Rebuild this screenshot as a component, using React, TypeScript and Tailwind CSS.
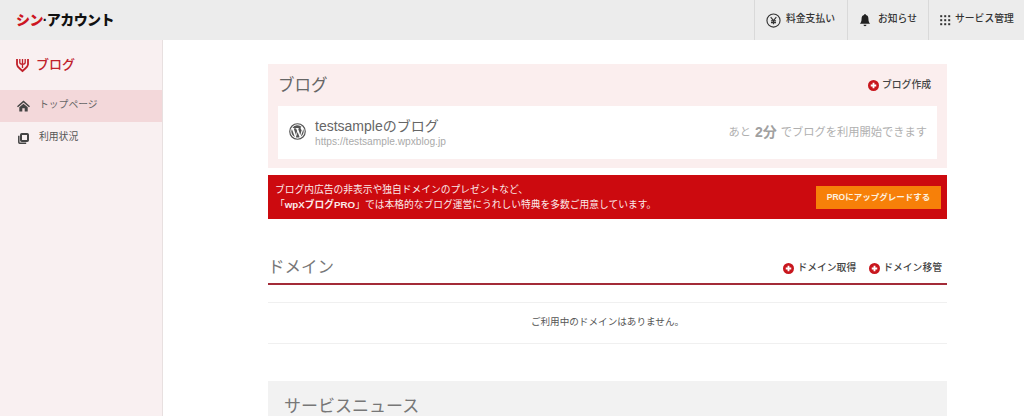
import React from "react";

const font = { fontFamily: '"Liberation Sans", "Noto Sans CJK JP", sans-serif' };

function PlusIcon() {
  return (
    <svg width="11" height="11" viewBox="0 0 12 12" className="shrink-0">
      <circle cx="6" cy="6" r="6" fill="#c8161d" />
      <path d="M6 3v6M3 6h6" stroke="#fff" strokeWidth="2" />
    </svg>
  );
}

function ActionLink({ label }: { label: string }) {
  return (
    <span className="flex items-center gap-[3px] text-[9.800px] font-medium text-[#444]">
      <PlusIcon />
      {label}
    </span>
  );
}

function YenIcon() {
  return (
    <svg width="15" height="15" viewBox="0 0 16 16" fill="none" stroke="#333" strokeWidth="1.2">
      <circle cx="8" cy="8" r="7" />
      <path d="M5 4.3 8 8l3-3.7M8 8v4M5.3 8.4h5.4M5.3 10.2h5.4" />
    </svg>
  );
}

function BellIcon() {
  return (
    <svg width="12" height="14" viewBox="0 0 14 15" fill="#222">
      <path d="M7 0.5c.7 0 1.1.5 1.1 1.1C10.300 2.100 11 3.900 11 6c0 3 .8 4.600 2 6H1c1.200-1.400 2-3 2-6 0-2.100.7-3.900 2.900-4.400C5.900 1 6.300.5 7 .5Z" />
      <path d="M5.300 13h3.400c0 1-.7 1.700-1.700 1.700S5.300 14 5.300 13Z" />
    </svg>
  );
}

function GridIcon() {
  return (
    <svg width="11" height="11" viewBox="0 0 11 11" fill="#333">
      {[0, 4, 8].flatMap((x) =>
        [0, 4, 8].map((y) => <rect key={`${x}-${y}`} x={x + 0.2} y={y + 0.2} width="2" height="2" />)
      )}
    </svg>
  );
}

function HeaderItem({ icon, label, cls }: { icon: React.ReactNode; label: string; cls: string }) {
  return (
    <div className={`flex h-full items-center border-l border-[#d9d9d9] pl-[11px] text-[9.800px] font-medium text-[#333] ${cls}`}>
      {icon}
      <span className="pb-[1px]">{label}</span>
    </div>
  );
}

function ShieldIcon() {
  return (
    <svg width="13" height="15" viewBox="0 0 13 15" fill="none" stroke="#c0202a" strokeWidth="1.800">
      <path d="M1 1v5.500c0 2.500 2.500 3.500 5.500 6.500 3-3 5.500-4 5.500-6.500V1" />
      <path d="M3.800 1v3.500c0 1 1.200 1.800 2.700 1.800s2.700-.8 2.700-1.800V1M6.500 1v9" strokeWidth="1.300" />
    </svg>
  );
}

function HomeIcon() {
  return (
    <svg width="13" height="12" viewBox="0 0 13 12" fill="#444">
      <path d="M6.500.5 0 6.300l1 1L6.500 2.500 12 7.300l1-1Z" />
      <path d="M2.300 7.300 6.500 3.700l4.200 3.600V11.500H7.700V8.300H5.300v3.200H2.300Z" />
    </svg>
  );
}

function CopyIcon() {
  return (
    <svg width="11" height="11" viewBox="0 0 11 11" fill="none" stroke="#444">
      <rect x="3" y="1" width="7" height="7" rx="0.800" strokeWidth="2" />
      <path d="M.8 2.800v6.500c0 .5.4.9.9.9h6.500" strokeWidth="1.500" />
    </svg>
  );
}

function WpIcon() {
  return (
    <svg width="17" height="17" viewBox="0 0 16 16" className="mb-[3px]">
      <circle cx="8" cy="8" r="7.300" fill="none" stroke="#555" strokeWidth="1.100" />
      <path d="M2.200 8c0 2.300 1.300 4.300 3.300 5.200L2.700 5.700C2.400 6.400 2.200 7.200 2.200 8Z" fill="#555" />
      <path d="M12 7.700c0-.7-.3-1.200-.5-1.600-.3-.5-.6-.9-.6-1.400 0-.5.4-1 1-1h.1A5.800 5.800 0 0 0 3.200 4.800h.4c.6 0 1.500-.1 1.500-.1.300 0 .3.400 0 .5 0 0-.3 0-.6.100l2 5.900 1.200-3.600-.9-2.300c-.3 0-.6-.1-.6-.1-.3 0-.3-.5 0-.5 0 0 .9.100 1.500.1s1.500-.1 1.500-.1c.3 0 .3.400 0 .5 0 0-.3 0-.6.100l2 5.900.6-1.900c.2-.7.400-1.300.400-1.700Z" fill="#555" />
      <path d="m8.100 8.500-1.700 5a5.800 5.800 0 0 0 3.600-.1L8.100 8.500ZM13.100 5.200c.1.200.1.400.1.700 0 .6-.1 1.200-.4 2l-1.800 5.100a5.800 5.800 0 0 0 2.100-7.800Z" fill="#555" />
    </svg>
  );
}

export default function App() {
  return (
    <div style={font} className="flex h-[416px] w-[1024px] flex-col overflow-hidden bg-white">
      <header className="flex h-[40px] shrink-0 items-center justify-between bg-[#ececec]">
        <div className="pl-[16px] text-[14px] font-black tracking-[-0.6px] text-[#111]">
          <span className="text-[#cc1522]">シン</span>·アカウント
        </div>
        <div className="flex h-full">
          <HeaderItem icon={<YenIcon />} label="料金支払い" cls="w-[93px] gap-[5px]" />
          <HeaderItem icon={<BellIcon />} label="お知らせ" cls="w-[81px] gap-[7px]" />
          <HeaderItem icon={<GridIcon />} label="サービス管理" cls="w-[96px] gap-[4px]" />
        </div>
      </header>
      <div className="flex min-h-0 flex-1">
        <aside className="w-[163px] shrink-0 border-r border-[#e8e0e0] bg-[#f9f0f1]">
          <div className="flex h-[50px] items-center gap-[7px] pl-[16px] text-[13px] font-medium text-[#c0202a]">
            <ShieldIcon />
            ブログ
          </div>
          <div className="flex h-[32px] items-center gap-[9px] bg-[#f3d8da] pl-[17px] text-[9.800px] text-[#666]">
            <HomeIcon />
            <span className="pb-[1px]">トップページ</span>
          </div>
          <div className="flex h-[32px] items-center gap-[10px] pl-[18px] text-[9.800px] text-[#555]">
            <CopyIcon />
            <span className="pb-[1px]">利用状況</span>
          </div>
        </aside>
        <main className="min-w-0 flex-1 pl-[105px] pt-[24px]">
          <div className="w-[679px]">
            <section className="h-[104px] bg-[#fbeeee] px-[10px]">
              <div className="flex h-[42px] items-center justify-between pr-[6px] pt-[1px]">
                <h2 className="text-[16.500px] text-[#666]">ブログ</h2>
                <ActionLink label="ブログ作成" />
              </div>
              <div className="flex h-[53px] items-center justify-between bg-white pl-[11px] pr-[10px]">
                <div className="flex items-center gap-[9px]">
                  <WpIcon />
                  <div>
                    <div className="text-[14px] leading-[18px] text-[#666]">testsampleのブログ</div>
                    <div className="text-[10.200px] leading-[13px] text-[#aaaaaa]">https://testsample.wpxblog.jp</div>
                  </div>
                </div>
                <div className="flex items-center gap-[4px] text-[11.250px] text-[#b0b0b0]">
                  あと <span className="text-[14px] font-bold text-[#a0a0a0]">2分</span> でブログを利用開始できます
                </div>
              </div>
            </section>
            <section className="mt-[7px] flex h-[44px] items-center justify-between bg-[#cc0a0f] pl-[7px] pr-[6px]">
              <p className="text-[9.750px] leading-[15px] text-[#fbe9e9]">
                ブログ内広告の非表示や独自ドメインのプレゼントなど、
                <br />
                「<b>wpXブログPRO</b>」では本格的なブログ運営にうれしい特典を多数ご用意しています。
              </p>
              <div className="flex h-[23px] w-[125px] items-center justify-center bg-[#f78009] text-[8.500px] font-bold text-[#fdf2e0]">
                PROにアップグレードする
              </div>
            </section>
            <section className="mt-[33px]">
              <div className="flex h-[33px] items-center justify-between border-b-2 border-[#a32b38] pr-[5px]">
                <h2 className="text-[16.500px] text-[#777]">ドメイン</h2>
                <div className="flex gap-[13px] pt-[1px]">
                  <ActionLink label="ドメイン取得" />
                  <ActionLink label="ドメイン移管" />
                </div>
              </div>
              <div className="mt-[17px] flex h-[42px] items-center justify-center border-y border-[#f0f0f0] pb-[1px] text-[9.600px] text-[#555]">
                ご利用中のドメインはありません。
              </div>
            </section>
            <section className="mt-[37px] h-[60px] bg-[#f2f2f2] pl-[16px] pt-[13px]">
              <h2 className="text-[17px] leading-[26px] text-[#777]">サービスニュース</h2>
            </section>
          </div>
        </main>
      </div>
    </div>
  );
}
